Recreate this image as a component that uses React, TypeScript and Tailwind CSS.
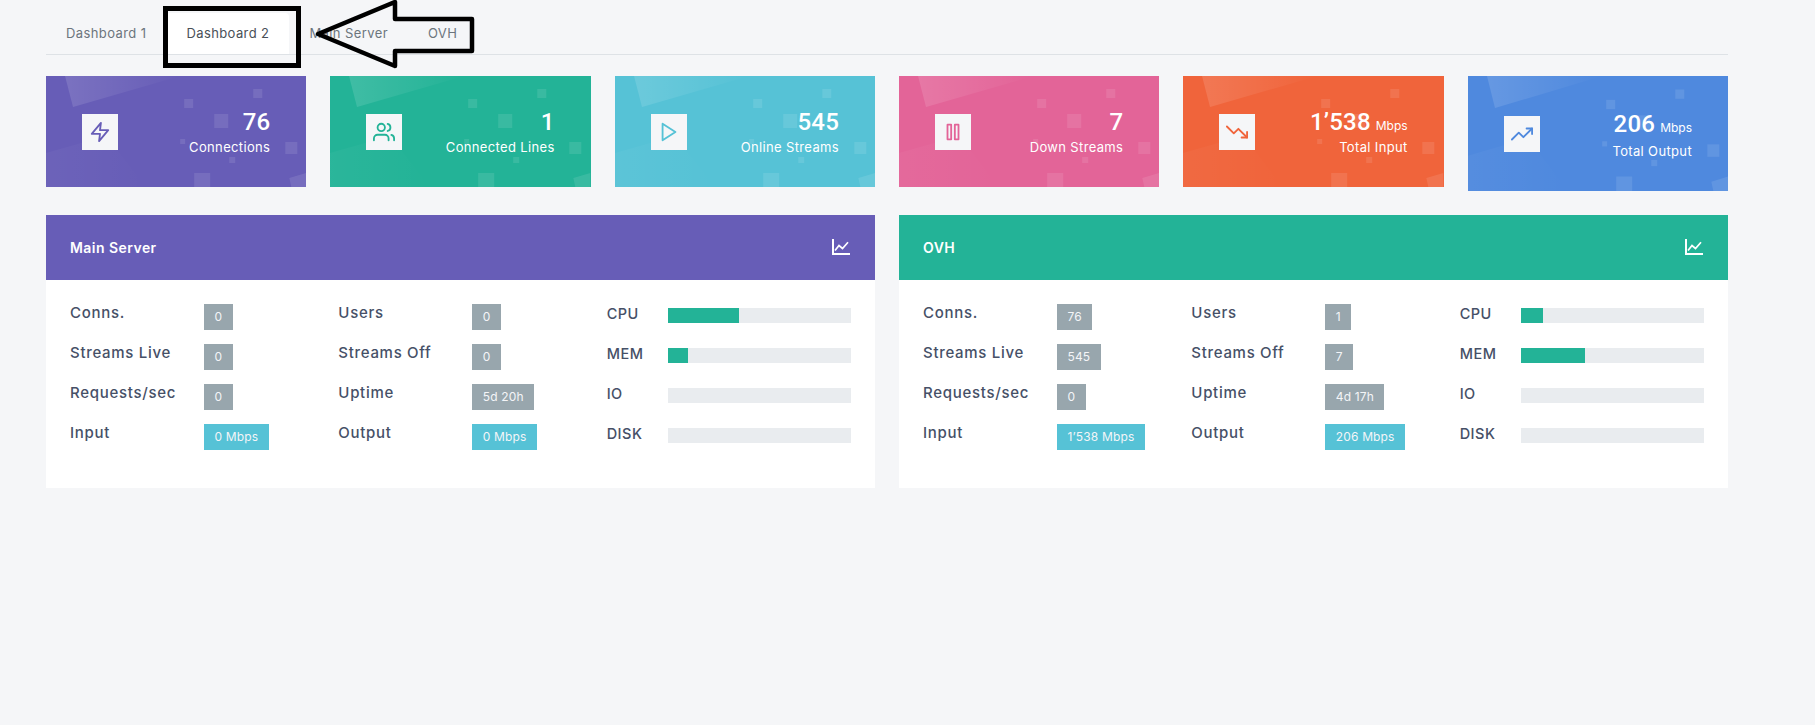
const sans = "font-['Inter','Liberation_Sans',sans-serif]";

function Feather({ color, children }: { color: string; children: React.ReactNode }) {
  return (
    <svg width="22" height="22" viewBox="0 0 24 24" fill="none" stroke={color} strokeWidth="2" strokeLinecap="round" strokeLinejoin="round">
      {children}
    </svg>
  );
}

function Art() {
  return (
    <svg className="absolute inset-0 w-full h-full" viewBox="0 0 260 111" preserveAspectRatio="none" fill="#fff">
      <defs>
        <linearGradient id="fade" x1="0" x2="1" y1="0" y2="0">
          <stop offset="0" stopColor="#fff" stopOpacity="0.13" />
          <stop offset="1" stopColor="#fff" stopOpacity="0" />
        </linearGradient>
        <linearGradient id="fade2" x1="0" x2="1" y1="0" y2="0">
          <stop offset="0" stopColor="#fff" stopOpacity="0.035" />
          <stop offset="1" stopColor="#fff" stopOpacity="0" />
        </linearGradient>
      </defs>
      <polygon points="19,0 134,0 27,31" fill="url(#fade)" />
      <polygon points="0,77 60,60 100,111 0,111" fill="url(#fade2)" />
      <g fillOpacity="0.1">
        <rect x="207" y="13" width="9" height="9" />
        <rect x="138" y="23" width="9" height="9" />
        <rect x="168" y="38" width="14" height="14" />
        <rect x="239" y="66" width="12" height="12" />
        <rect x="134" y="63" width="5" height="5" />
        <rect x="183" y="81" width="6" height="6" />
        <rect x="148" y="97" width="16" height="14" />
        <polygon points="243,102 260,97 260,111 245,111" />
      </g>
    </svg>
  );
}

type CardT = {
  bg: string; color: string; value: string; unit?: string; label: string; tall?: boolean; icon: React.ReactNode;
};

const cards: CardT[] = [
  { bg: "bg-[#675db7]", color: "#675db7", value: "76", label: "Connections",
    icon: <polygon points="13 2 3 14 12 14 11 22 21 10 12 10 13 2" /> },
  { bg: "bg-[#23b397]", color: "#23b397", value: "1", label: "Connected Lines",
    icon: <><path d="M17 21v-2a4 4 0 0 0-4-4H5a4 4 0 0 0-4 4v2" /><circle cx="9" cy="7" r="4" /><path d="M23 21v-2a4 4 0 0 0-3-3.87" /><path d="M16 3.13a4 4 0 0 1 0 7.75" /></> },
  { bg: "bg-[#56c2d6]", color: "#56c2d6", value: "545", label: "Online Streams",
    icon: <polygon points="5 3 19 12 5 21 5 3" /> },
  { bg: "bg-[#e36498]", color: "#e36498", value: "7", label: "Down Streams",
    icon: <><rect x="6" y="4" width="4" height="16" /><rect x="14" y="4" width="4" height="16" /></> },
  { bg: "bg-[#f0643b]", color: "#f0643b", value: "1’538", unit: "Mbps", label: "Total Input",
    icon: <><polyline points="23 18 13.5 8.5 8.5 13.5 1 6" /><polyline points="17 18 23 18 23 12" /></> },
  { bg: "bg-[#4f89de]", color: "#4f89de", value: "206", unit: "Mbps", label: "Total Output", tall: true,
    icon: <><polyline points="23 6 13.5 15.5 8.5 10.5 1 18" /><polyline points="17 6 23 6 23 12" /></> },
];

function StatCard({ c }: { c: CardT }) {
  return (
    <div className={`relative overflow-hidden self-start flex items-center justify-between pl-9 pr-9 ${c.tall ? "h-[115px]" : "h-[111px]"} ${c.bg}`}>
      <Art />
      <div className="relative w-9 h-9 bg-[#f5f6f8] flex items-center justify-center shrink-0">
        <Feather color={c.color}>{c.icon}</Feather>
      </div>
      <div className={`relative text-right text-white mt-[2px] ${c.tall ? "pb-[2px]" : "pb-[4px]"}`}>
        <div className="h-[34px] leading-[34px] font-['Roboto',sans-serif] font-medium text-[24px] tracking-[0.2px]">
          {c.value}
          {c.unit && <span className={`${sans} font-normal text-[12px] ml-[5px] tracking-normal`}>{c.unit}</span>}
        </div>
        <div className={`${sans} text-[13px] leading-[20px] tracking-[0.35px] ${c.tall ? "mt-0" : "-mt-[2px]"}`}>{c.label}</div>
      </div>
    </div>
  );
}

function Badge({ text, info }: { text: string; info?: boolean }) {
  return (
    <span className={`${sans} h-[26px] px-[10.5px] inline-flex items-center text-[12px] tracking-[0.15px] text-[#f4f5f8] ${info ? "bg-[#56c2d6]" : "bg-[#98a6ad]"}`}>
      {text}
    </span>
  );
}

function StatRow({ label, value, info }: { label: string; value: string; info?: boolean }) {
  return (
    <div className="flex items-start h-[26px]">
      <div className={`${sans} w-[134px] shrink-0 text-[15px] leading-[18px] font-medium tracking-[0.7px] text-[#465067]`}>{label}</div>
      <Badge text={value} info={info} />
    </div>
  );
}

function Bar({ label, pct }: { label: string; pct: number }) {
  return (
    <div className="flex items-start h-[26px]">
      <div className={`${sans} w-[61px] shrink-0 text-[14.5px] leading-[20px] font-medium tracking-[0.5px] text-[#465067]`}>{label}</div>
      <div className="flex-1 h-[15px] mt-[4px] bg-[#e9ecef]">
        <div className="h-full bg-[#23b397]" style={{ width: `${pct}%` }} />
      </div>
    </div>
  );
}

type PanelT = {
  title: string; bg: string;
  col1: string[]; col2: string[]; cpu: number; mem: number;
};

function Panel({ p }: { p: PanelT }) {
  const l1 = ["Conns.", "Streams Live", "Requests/sec", "Input"];
  const l2 = ["Users", "Streams Off", "Uptime", "Output"];
  return (
    <div className="bg-white">
      <div className={`${p.bg} h-[65px] pl-6 pr-6 flex items-center justify-between`}>
        <div className={`${sans} text-white text-[14px] font-semibold tracking-[0.45px]`}>{p.title}</div>
        <svg width="18" height="16" viewBox="0 0 18 16" fill="none" stroke="#fff" className="mr-[1px] -mt-[2px]">
          <path d="M1 0v15H18" strokeWidth="2" />
          <path d="M3 11.5l4-5 3.5 3L16 3.2" strokeWidth="1.7" />
        </svg>
      </div>
      <div className="grid grid-cols-3 gap-x-6 pl-6 pr-6 pt-6 pb-[38px]">
        <div className="flex flex-col gap-[14px]">
          {l1.map((l, i) => <StatRow key={l} label={l} value={p.col1[i]} info={i === 3} />)}
        </div>
        <div className="flex flex-col gap-[14px]">
          {l2.map((l, i) => <StatRow key={l} label={l} value={p.col2[i]} info={i === 3} />)}
        </div>
        <div className="flex flex-col gap-[14px]">
          <Bar label="CPU" pct={p.cpu} />
          <Bar label="MEM" pct={p.mem} />
          <Bar label="IO" pct={0} />
          <Bar label="DISK" pct={0} />
        </div>
      </div>
    </div>
  );
}

const panels: PanelT[] = [
  { title: "Main Server", bg: "bg-[#675db7]", col1: ["0", "0", "0", "0 Mbps"], col2: ["0", "0", "5d 20h", "0 Mbps"], cpu: 38.8, mem: 10.9 },
  { title: "OVH", bg: "bg-[#23b397]", col1: ["76", "545", "0", "1’538 Mbps"], col2: ["1", "7", "4d 17h", "206 Mbps"], cpu: 12, mem: 35 },
];

const tabs = ["Dashboard 1", "Dashboard 2", "Main Server", "OVH"];

export default function App() {
  return (
    <div className="relative min-h-[725px] bg-[#f5f6f8] pl-[46px] pr-[87px] pt-[13px]">
      <div className="flex border-b border-[#dee2e6] h-[42px]">
        {tabs.map((t, i) => (
          <div
            key={t}
            className={`${sans} px-5 flex items-center text-[13px] tracking-[0.4px] rounded-t-[4px] ${i === 1 ? "bg-white text-[#495057]" : "text-[#6c757d]"}`}
          >
            {t}
          </div>
        ))}
      </div>

      <div className="grid grid-cols-6 gap-6 mt-[21px]">
        {cards.map((c) => <StatCard key={c.label} c={c} />)}
      </div>

      <div className="grid grid-cols-2 gap-6 mt-6">
        {panels.map((p) => <Panel key={p.title} p={p} />)}
      </div>

      {/* annotation drawn over the page */}
      <div className="absolute left-[163px] top-[6px] w-[138px] h-[62px] border-[5px] border-black pointer-events-none" />
      <svg className="absolute left-[310px] top-0 pointer-events-none" width="170" height="72" fill="none">
        <polygon points="8,34 85,2 85,19 162,19 162,51 85,51 85,66" stroke="#000" strokeWidth="4.5" strokeLinejoin="round" />
      </svg>
    </div>
  );
}
